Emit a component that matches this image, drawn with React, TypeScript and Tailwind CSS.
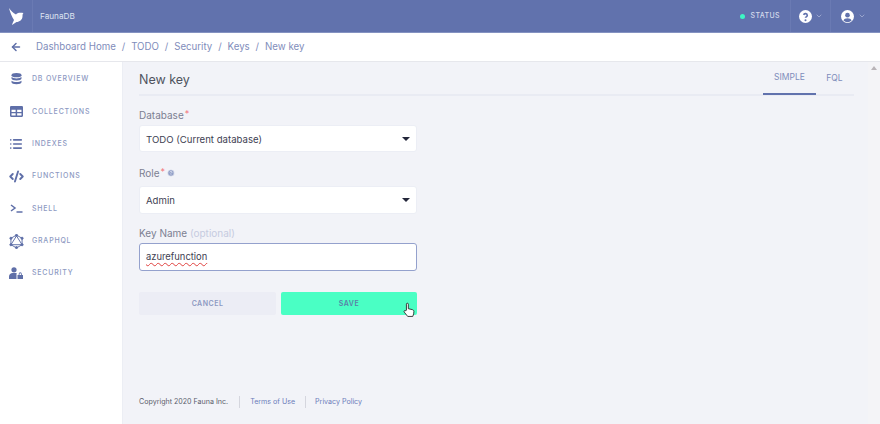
import { ArrowLeft, ChevronDown, CircleHelp, List, CodeXml } from "lucide-react";

const navItems = [
  { label: "DB OVERVIEW", icon: "db" },
  { label: "COLLECTIONS", icon: "table" },
  { label: "INDEXES", icon: "list" },
  { label: "FUNCTIONS", icon: "code" },
  { label: "SHELL", icon: "shell" },
  { label: "GRAPHQL", icon: "graphql" },
  { label: "SECURITY", icon: "security" },
];

const crumbs = ["Dashboard Home", "TODO", "Security", "Keys", "New key"];

function NavIcon({ name }: { name: string }) {
  const cls = "w-[13px] h-[13px] text-[#5f6fa8]";
  if (name === "db") {
    return (
      <svg viewBox="0 0 12 13" className={cls} fill="currentColor">
        <ellipse cx="6" cy="2.2" rx="5" ry="2.1" />
        <path d="M1 4v1.6c0 1.1 2.2 2 5 2s5-.9 5-2V4c-1 .9-3 1.4-5 1.4S2 4.900 1 4z" />
        <path d="M1 7.700v1.500c0 1.100 2.200 2 5 2s5-.9 5-2V7.700c-1 .9-3 1.400-5 1.400s-4-.5-5-1.400z" />
      </svg>
    );
  }
  if (name === "table") {
    return (
      <svg viewBox="0 0 12 12" className={cls} fill="currentColor">
        <path fillRule="evenodd" d="M1 1h10a1 1 0 0 1 1 1v8a1 1 0 0 1-1 1H1a1 1 0 0 1-1-1V2a1 1 0 0 1 1-1zm.4 3.400v2h3.800v-2H1.400zm5.200 0v2h4v-2h-4zm-5.200 3.200v2h3.800v-2H1.400zm5.200 0v2h4v-2h-4z" />
      </svg>
    );
  }
  if (name === "list") {
    return <List className="w-[14px] h-[14px] text-[#5f6fa8]" strokeWidth={2.8} />;
  }
  if (name === "code") {
    return <CodeXml className="w-[15px] h-[15px] text-[#5f6fa8]" strokeWidth={3} />;
  }
  if (name === "shell") {
    return (
      <svg viewBox="0 0 13 10" className={cls} fill="none" stroke="currentColor" strokeWidth="1.500">
        <path d="M1 1.500 5 4.500 1 7.500" />
        <path d="M6.500 8.500H12.500" />
      </svg>
    );
  }
  if (name === "graphql") {
    return (
      <svg viewBox="0 0 14 14" className="w-[15px] h-[15px] text-[#5f6fa8]" fill="currentColor" stroke="currentColor" strokeWidth="0.9">
        <path d="M7 1 12.200 4v6L7 13 1.800 10V4z" fill="none" />
        <path d="M7 1.800 12.200 10H1.800z" fill="none" />
        <circle cx="7" cy="1.300" r="1" />
        <circle cx="12.200" cy="4" r="1" />
        <circle cx="12.200" cy="10" r="1" />
        <circle cx="7" cy="12.700" r="1" />
        <circle cx="1.800" cy="10" r="1" />
        <circle cx="1.800" cy="4" r="1" />
      </svg>
    );
  }
  return (
    <svg viewBox="0 0 14 12" className="w-[14px] h-[12px] text-[#5f6fa8]" fill="currentColor">
      <circle cx="5" cy="2.800" r="2.600" />
      <path d="M0 12V9.500C0 7.500 1.800 6 3.500 6h3c.6 0 1 .1 1.300.3-.2.4-.3.8-.3 1.200V12H0z" />
      <path fillRule="evenodd" d="M8.500 8h5.500v4H8.500V8zm1.200 0V6.900a1.550 1.550 0 0 1 3.100 0V8h-.8V6.900a.75.75 0 0 0-1.500 0V8h-.8z" />
    </svg>
  );
}

function SelectField({ value, tall }: { value: string; tall?: boolean }) {
  return (
    <div className={`${tall ? "h-[28px]" : "h-[27px]"} bg-white rounded-[3px] border border-[#eceef5] flex items-center justify-between pl-[6px] pr-[6px]`}>
      <span className="text-[9.600px] text-[#3e4152] pt-[3px]">{value}</span>
      <span className="w-0 h-0 border-x-[4px] border-x-transparent border-t-[4px] border-t-[#23263a]" />
    </div>
  );
}

export default function App() {
  return (
    <div className="w-[880px] h-[424px] overflow-hidden flex flex-col bg-[#f2f3f8] font-['Inter',sans-serif]">
      {/* Top bar */}
      <header className="h-[33px] shrink-0 bg-[#6172ad] border-b border-[#8492c1] flex items-center">
        <div className="w-[32px] flex justify-center">
          <svg viewBox="0 0 15 17" className="w-[15px] h-[17px] text-white" fill="currentColor">
            <path d="M0 0C2 3 4 5 7 6.500 8 5 10 4.500 14.500 5 13.500 6 13.500 7 13.500 8.500 13.500 11.500 10.500 14 7.500 14L3 17C3.500 15 4.500 13 5 12 3 9 1 4.500 0 0z" />
          </svg>
        </div>
        <div className="h-full border-l border-[#6a7ab3]" />
        <span className="ml-[7px] text-[8.200px] text-[#dfe3f0]">FaunaDB</span>
        <div className="ml-auto flex items-center h-full">
          <span className="w-[5px] h-[5px] rounded-full bg-[#3df5c4]" />
          <span className="ml-[5.500px] text-[7px] tracking-[0.4px] font-medium text-[#d6dbec]">STATUS</span>
          <div className="ml-[10px] h-full border-l border-[#6a7ab3]" />
          <svg viewBox="0 0 24 24" className="ml-[8px] w-[13px] h-[13px]" fill="none">
            <circle cx="12" cy="12" r="12" fill="#ffffff" />
            <path d="M8.500 9a3.500 3.500 0 0 1 6.800 1.100c0 2.300-3.300 2.600-3.300 4.400" stroke="#6172ad" strokeWidth="3" />
            <circle cx="12" cy="18.800" r="1.900" fill="#6172ad" />
          </svg>
          <ChevronDown className="ml-[3px] w-[8px] h-[8px] text-[#a5afd2]" strokeWidth={2.5} />
          <div className="ml-[7px] h-full border-l border-[#6a7ab3]" />
          <svg viewBox="0 0 24 24" className="ml-[10px] w-[13px] h-[13px]">
            <circle cx="12" cy="12" r="12" fill="#ffffff" />
            <circle cx="12" cy="9.500" r="4.300" fill="#6172ad" />
            <path d="M4.500 19.500c1-3 4-4.300 7.500-4.300s6.500 1.300 7.500 4.300a10.500 10.500 0 0 1-15 0z" fill="#6172ad" />
          </svg>
          <ChevronDown className="ml-[4px] w-[8px] h-[8px] mr-[14px] text-[#a5afd2]" strokeWidth={2.5} />
        </div>
      </header>

      {/* Breadcrumbs */}
      <div className="h-[29px] shrink-0 bg-white border-b border-[#e6e7ec] flex items-center">
        <ArrowLeft className="ml-[10px] w-[12px] h-[12px] text-[#5f6fa8]" strokeWidth={3} />
        <nav className="ml-[14px] pt-[1px] flex items-center text-[9.700px] text-[#7f8dbb]">
          {crumbs.map((crumb, i) => (
            <span key={crumb} className="flex items-center">
              {i > 0 && <span className="mx-[5.900px]">/</span>}
              {crumb}
            </span>
          ))}
        </nav>
      </div>

      <div className="flex-1 flex min-h-0">
        {/* Sidebar */}
        <aside className="w-[123px] shrink-0 bg-white border-r border-[#eceef4] pt-[1.500px]">
          {navItems.map((item) => (
            <div key={item.label} className="h-[32.300px] flex items-center">
              <div className="w-[32px] flex justify-center">
                <NavIcon name={item.icon} />
              </div>
              <span className="text-[7px] font-medium tracking-[0.8px] text-[#8d99c2]">{item.label}</span>
            </div>
          ))}
        </aside>

        {/* Main */}
        <main className="flex-1 flex flex-col min-w-0 relative">
          <div className="pl-[16px] pr-[26px] flex-1 flex flex-col">
            <div className="h-[34px] flex items-stretch border-b-2 border-[#e9ebf3]">
              <h1 className="text-[12.500px] text-[#50535f] leading-[36px]">New key</h1>
              <div className="ml-auto flex h-[33px] text-[8.500px] text-[#7f8dbb]">
                <div className="w-[53px] h-[33px] flex items-center justify-center border-b-2 border-[#6172ad]">SIMPLE</div>
                <div className="w-[37px] h-[33px] flex items-center justify-center mr-[1px]">FQL</div>
              </div>
            </div>

            <form className="w-[278px]">
              <label className="block mt-[12px] h-[17px] text-[10px] leading-[14px] text-[#7c7f92]">
                Database<span className="text-[#f2737c] align-top text-[9px] leading-[12px] ml-[1px]">*</span>
              </label>
              <SelectField value="TODO (Current database)" />

              <label className="mt-[14px] h-[20px] flex items-start text-[10px] leading-[14px] text-[#7c7f92]">
                Role<span className="text-[#f2737c] text-[9px] leading-[12px] ml-[1px]">*</span>
                <CircleHelp className="ml-[2px] mt-[3px] w-[8px] h-[8px] text-[#f2f3f8] fill-[#93a0c8]" strokeWidth={2} />
              </label>
              <SelectField value="Admin" tall />

              <label className="block mt-[12px] h-[17px] text-[10px] leading-[14px] text-[#7c7f92]">
                Key Name <span className="text-[#c6cbe0]">(optional)</span>
              </label>
              <div className="h-[28px] bg-white rounded-[3px] border border-[#94a1cd] flex items-center pl-[6px]">
                <span className="text-[9.400px] text-[#3e4152] pt-[1px] underline decoration-wavy decoration-[#e0413f] decoration-[0.7px] underline-offset-[2px]">azurefunction</span>
              </div>

              <div className="mt-[21px] flex gap-[5px]">
                <button type="button" className="w-[137px] h-[23px] pt-[2px] rounded-[2px] bg-[#ecedf5] text-[7px] font-semibold tracking-[0.5px] text-[#8d99c2]">CANCEL</button>
                <button type="button" className="w-[136px] h-[23px] pt-[2px] rounded-[2px] bg-[#4affc4] text-[7px] font-semibold tracking-[0.5px] text-[#5b7fa8]">SAVE</button>
              </div>
            </form>

            <footer className="mt-auto mb-[15px] flex items-center h-[14px] text-[7.100px] text-[#5a5d6c]">
              <span>Copyright 2020 Fauna Inc.</span>
              <span className="mx-[10.500px] h-[12px] border-l border-[#d5d6de]" />
              <span className="text-[#6c7cba]">Terms of Use</span>
              <span className="mx-[9.500px] h-[12px] border-l border-[#d5d6de]" />
              <span className="text-[#6c7cba]">Privacy Policy</span>
            </footer>
          </div>

          {/* Hand cursor over the save button */}
          <svg viewBox="0 0 14 18" className="absolute left-[280px] top-[240px] w-[12px] h-[16px]" fill="#ffffff" stroke="#222222" strokeWidth="1">
            <path d="M4 9V2.200a1.100 1.100 0 0 1 2.200 0V7.500l4.500 1c1.200.3 2 1 2 2.200 0 2-.3 3.500-1.300 5.800H5.500L1.500 11.500c-1-1.300.6-2.600 1.800-1.500z" />
          </svg>

          {/* Scrollbar track */}
          <div className="absolute right-0 top-0 bottom-0 w-[12px] bg-[#f4f4f7] flex justify-center pt-[4px]">
            <span className="w-0 h-0 border-x-[3px] border-x-transparent border-b-[4px] border-b-[#b9b4b8]" />
          </div>
        </main>
      </div>
    </div>
  );
}
